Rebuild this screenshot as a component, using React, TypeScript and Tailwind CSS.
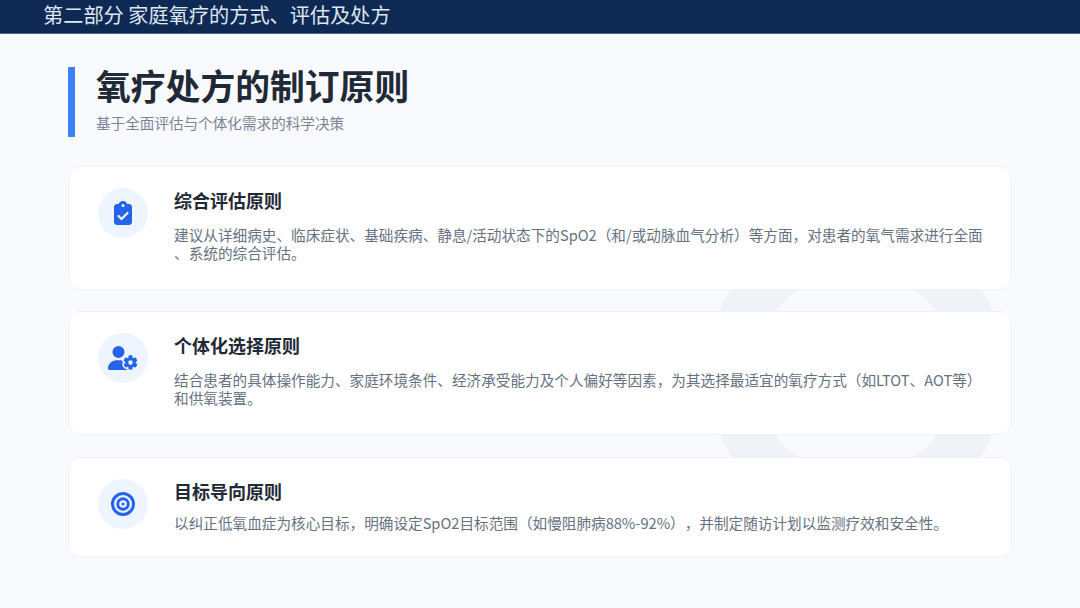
import { FaBullseye, FaClipboardCheck, FaUserGear } from "react-icons/fa6";
import type { ReactNode } from "react";

const font = { fontFamily: '"Noto Sans CJK SC", "Noto Sans", sans-serif' };

function PrincipleCard({
  icon,
  title,
  children,
  className,
  textClass,
}: {
  icon: ReactNode;
  title: string;
  children: ReactNode;
  className: string;
  textClass: string;
}) {
  return (
    <div
      className={`flex rounded-[12px] border border-[#f0f2f6] bg-white pl-[29px] pr-[20px] pt-[21px] ${className}`}>
      <div className="flex h-[50px] w-[50px] shrink-0 items-center justify-center rounded-full bg-[#eff5fe] text-[#2563eb]">
        {icon}
      </div>
      <div className="ml-[26px] min-w-0 flex-1">
        <h3 className="h-[24px] text-[18px] font-bold leading-[24px] text-[#1f2937]">{title}</h3>
        <p className={`whitespace-nowrap text-[14.64px] leading-[18px] text-[#667180] [text-spacing-trim:space-all] ${textClass}`}>
          {children}
        </p>
      </div>
    </div>
  );
}

export default function App() {
  return (
    <div className="relative h-[608px] w-[1080px] overflow-hidden bg-[#f8fafd]" style={font}>
      {/* big faint ring behind the cards */}
      <div className="absolute left-[706px] top-[223px] h-[300px] w-[300px] rounded-full border-[48px] border-[#eff2f7]" />

      <div className="relative">
        <header className="flex h-[34px] items-center border-b border-[#4a6a94] bg-[#0e2a54] pb-[2px] pl-[43px]">
          <span className="text-[20.2px] leading-none text-[#dfe7f1] [text-spacing-trim:space-all]">第二部分 家庭氧疗的方式、评估及处方</span>
        </header>

        <div className="px-[68px] pt-[33px]">
          <div className="h-[70px] rounded-[1px] border-l-[7px] border-[#3b82f6] pl-[21px]">
            <h1 className="h-[36px] text-[34.8px] font-bold leading-[36px] text-[#1f2937]">氧疗处方的制订原则</h1>
            <p className="mt-[9px] text-[14.6px] leading-[22px] text-[#7b8494]">基于全面评估与个体化需求的科学决策</p>
          </div>

          <div className="mt-[29px] flex w-[944px] flex-col">
            <PrincipleCard
              className="h-[124px]"
              textClass="mt-[14px]"
              title="综合评估原则"
              icon={<FaClipboardCheck className="h-[24px] w-[18px]" />}>
              建议从详细病史、临床症状、基础疾病、静息/活动状态下的SpO2（和/或动脉血气分析）等方面，对患者的氧气需求进行全面
              <br />
              、系统的综合评估。
            </PrincipleCard>
            <PrincipleCard
              className="mt-[21px] h-[124px]"
              textClass="mt-[14px]"
              title="个体化选择原则"
              icon={<FaUserGear className="h-[24px] w-[30px]" />}>
              结合患者的具体操作能力、家庭环境条件、经济承受能力及个人偏好等因素，为其选择最适宜的氧疗方式（如LTOT、AOT等）
              <br />
              和供氧装置。
            </PrincipleCard>
            <PrincipleCard
              className="mt-[22px] h-[100px]"
              textClass="mt-[11px]"
              title="目标导向原则"
              icon={<FaBullseye className="h-[24px] w-[24px]" />}>
              以纠正低氧血症为核心目标，明确设定SpO2目标范围（如慢阻肺病88%-92%），并制定随访计划以监测疗效和安全性。
            </PrincipleCard>
          </div>
        </div>
      </div>
    </div>
  );
}
